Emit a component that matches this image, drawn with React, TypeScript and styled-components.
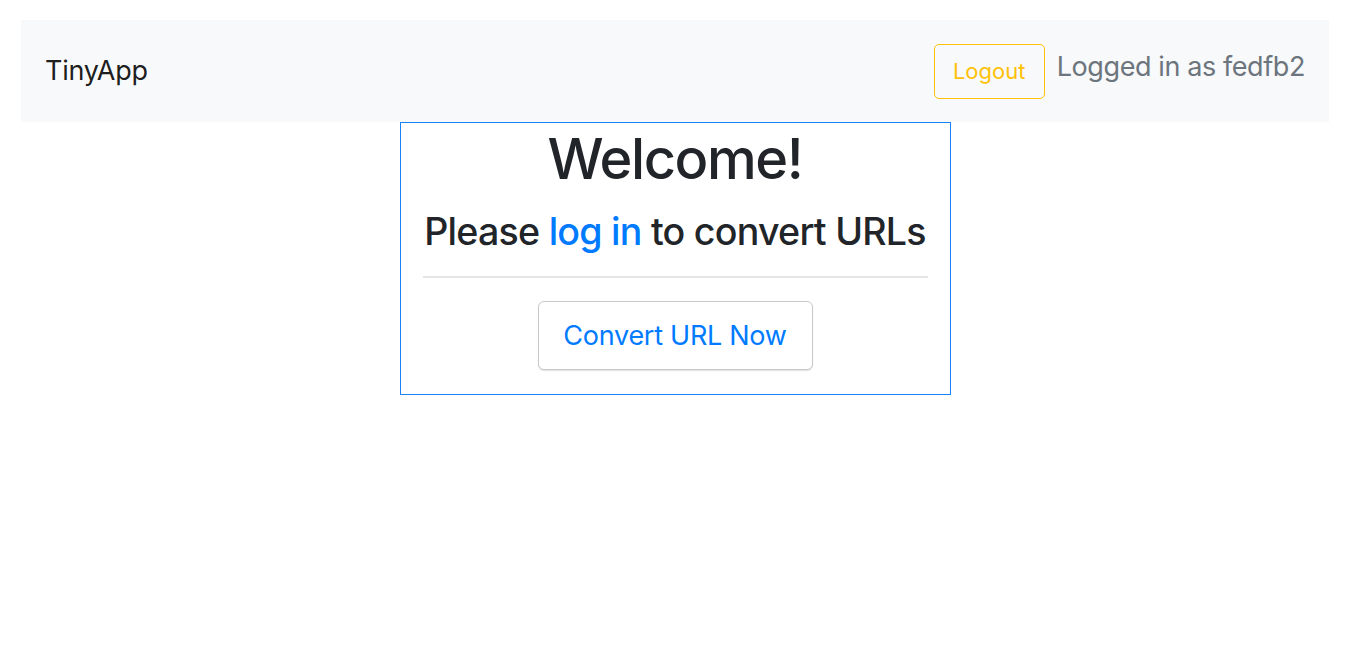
import { createGlobalStyle, styled } from "styled-components";

const GlobalStyle = createGlobalStyle`
  body {
    margin: 0;
    background: #fff;
    font-family: Inter, "Liberation Sans", Arial, sans-serif;
    color: #212529;
  }
`;

const App = () => {
  return (
    <>
      <GlobalStyle />
      <Page>
        <NavBar>
          <Brand href="#">TinyApp</Brand>
          <NavRight>
            <LogoutBtn type="button">Logout</LogoutBtn>
            <UserText>Logged in as fedfb2</UserText>
          </NavRight>
        </NavBar>
        <Card>
          <Title>Welcome!</Title>
          <Subtitle>
            Please <a href="#">log in</a> to convert URLs
          </Subtitle>
          <Divider />
          <ConvertBtn type="button">Convert URL Now</ConvertBtn>
        </Card>
      </Page>
    </>
  );
};

export default App;

const Page = styled.div`
  padding: 20px 17px 0 21px;
`;

const NavBar = styled.nav`
  display: flex;
  justify-content: space-between;
  align-items: center;
  height: 102px;
  padding: 0 24px;
  background: #f8f9fa;
`;

const Brand = styled.a`
  font-size: 27px;
  line-height: 1.5;
  color: rgba(0, 0, 0, 0.9);
  text-decoration: none;
  letter-spacing: -0.01em;
`;

const NavRight = styled.div`
  display: flex;
  align-items: flex-start;
  gap: 12px;
`;

const LogoutBtn = styled.button`
  width: 111px;
  height: 55px;
  padding: 0;
  border: 1px solid #ffc107;
  border-radius: 5px;
  background: transparent;
  color: #ffc107;
  font-family: inherit;
  font-size: 22px;
  cursor: pointer;
`;

const UserText = styled.span`
  margin-top: 2px;
  font-size: 27px;
  line-height: 42px;
  color: #6c757d;
  letter-spacing: -0.015em;
`;

const Card = styled.div`
  display: flex;
  flex-direction: column;
  align-items: center;
  width: 551px;
  box-sizing: border-box;
  margin: 0 auto;
  padding: 0 22px 24px;
  border: 1px solid #1a82f7;
  text-align: center;
`;

const Title = styled.h1`
  margin: 3px 0 0;
  font-size: 56px;
  font-weight: 500;
  line-height: 1.2;
  letter-spacing: -0.025em;
`;

const Subtitle = styled.h3`
  margin: 16px 0 0;
  font-size: 37.6px;
  font-weight: 500;
  line-height: 1.2;
  letter-spacing: -0.02em;
  white-space: nowrap;

  a {
    color: #007bff;
    text-decoration: none;
  }
`;

const Divider = styled.hr`
  align-self: stretch;
  margin: 22px 0 23px;
  border: 0;
  border-top: 2px solid #e5e5e5;
`;

const ConvertBtn = styled.button`
  width: 275px;
  height: 69px;
  padding: 0;
  border: 1px solid #c8c8c8;
  border-radius: 6px;
  background: #fff;
  box-shadow: 0 1px 1px rgba(0, 0, 0, 0.12);
  color: #007bff;
  font-family: inherit;
  font-size: 27px;
  letter-spacing: -0.01em;
  cursor: pointer;
`;
